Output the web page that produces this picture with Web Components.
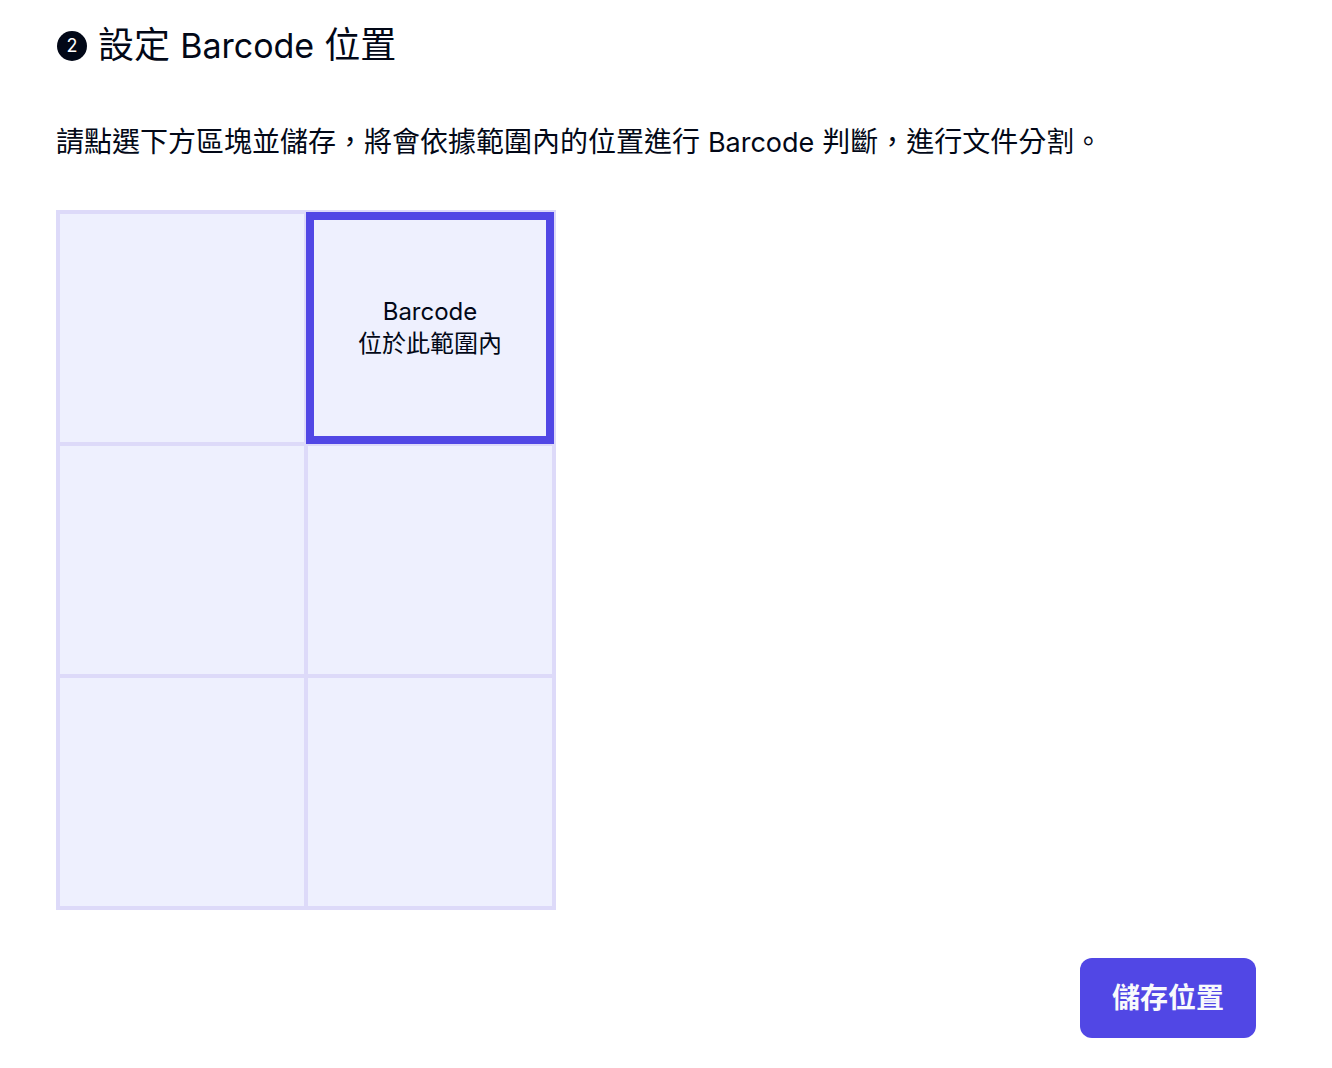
<!DOCTYPE html>
<html lang="zh-Hant">
<head>
<meta charset="utf-8">
<meta name="viewport" content="width=device-width, initial-scale=1">
<title>設定 Barcode 位置</title>
<style>
  body {
    margin: 0;
    background: #fff;
    color: #020817;
    font-family: Inter, "Noto Sans CJK TC", sans-serif;
    --primary: #5147e5;
    --cell: #eef0fe;
    --line: #dddaf9;
  }
  /* Inter runs large next to the Chinese glyphs, so its words are set a step smaller */
  [lang="en"] { font-size: 27px; }
  step-heading [lang="en"] { font-size: 34px; }
</style>
</head>
<body>
<barcode-settings>
  <step-heading slot="heading" step="2">設定 <span lang="en">Barcode</span> 位置</step-heading>
  <span slot="hint">請點選下方區塊並儲存，將會依據範圍內的位置進行 <span lang="en">Barcode</span> 判斷，進行文件分割。</span>
  <region-picker columns="2" rows="3" selected="2">Barcode<br>位於此範圍內</region-picker>
  <save-button slot="action">儲存位置</save-button>
</barcode-settings>

<script>
  class BarcodeSettings extends HTMLElement {
    constructor() {
      super();
      this.attachShadow({ mode: "open" }).innerHTML = `
        <style>
          :host { display: block; padding: 18px 76px 28px 56px; }
          section { display: flex; flex-direction: column; gap: 48px; }
          .text { display: flex; flex-direction: column; gap: 50px; }
          p { margin: 0; font-size: 28px; line-height: 38px; }
          footer { display: flex; justify-content: flex-end; }
        </style>
        <section>
          <div class="text">
            <slot name="heading"></slot>
            <p><slot name="hint"></slot></p>
          </div>
          <slot></slot>
          <footer><slot name="action"></slot></footer>
        </section>`;
    }
  }

  class StepHeading extends HTMLElement {
    connectedCallback() {
      this.attachShadow({ mode: "open" }).innerHTML = `
        <style>
          :host { display: block; }
          h2 { display: flex; align-items: center; gap: 10px; margin: 0; font-size: 36px; font-weight: 400; line-height: 54px; }
          .mark {
            display: grid; place-items: center; width: 30px; height: 30px; margin: 0 1px;
            border-radius: 50%; background: currentColor;
          }
          .mark b { color: #fff; font-size: 18px; font-weight: 400; line-height: 30px; }
        </style>
        <h2><span class="mark"><b>${this.getAttribute("step")}</b></span><span><slot></slot></span></h2>`;
    }
  }

  class RegionPicker extends HTMLElement {
    connectedCallback() {
      const columns = Number(this.getAttribute("columns"));
      const rows = Number(this.getAttribute("rows"));
      this.selected = Number(this.getAttribute("selected"));
      this.attachShadow({ mode: "open" }).innerHTML = `
        <style>
          :host { display: block; }
          .grid {
            box-sizing: border-box; width: 100%; max-width: 500px; aspect-ratio: 5 / 7;
            display: grid; grid-template: repeat(${rows}, 1fr) / repeat(${columns}, 1fr);
            border: 2px solid var(--line);
          }
          label {
            display: grid; place-items: center; min-width: 0;
            background: var(--cell); cursor: pointer;
            font-size: 24px; line-height: 32px; text-align: center;
          }
          input, span { grid-area: 1 / 1; }
          input {
            appearance: none; box-sizing: border-box; margin: 0;
            place-self: stretch; border: 2px solid var(--line); cursor: pointer;
          }
          input:checked { border: 8px solid var(--primary); }
        </style>
        <div class="grid" role="radiogroup"></div>`;
      const grid = this.shadowRoot.querySelector(".grid");
      for (let n = 1; n <= columns * rows; n++) {
        const label = document.createElement("label");
        const input = document.createElement("input");
        input.type = "radio";
        input.name = "region";
        input.value = n;
        input.checked = n === this.selected;
        input.setAttribute("aria-label", `區塊 ${n}`);
        const span = document.createElement("span");
        label.append(input, span);
        grid.append(label);
      }
      const caption = document.createElement("slot");
      const place = () => grid.querySelector("input:checked + span").append(caption);
      grid.addEventListener("change", place);
      place();
    }
  }

  class SaveButton extends HTMLElement {
    constructor() {
      super();
      this.attachShadow({ mode: "open" }).innerHTML = `
        <style>
          :host { display: block; }
          button {
            display: block; margin: 0; padding: 20px 32px; border: 0; border-radius: 12px;
            background: var(--primary); color: #f8fafc; cursor: pointer;
            font: inherit; font-size: 28px; font-weight: 700; line-height: 40px;
          }
        </style>
        <button type="button"><slot></slot></button>`;
    }
  }

  customElements.define("barcode-settings", BarcodeSettings);
  customElements.define("step-heading", StepHeading);
  customElements.define("region-picker", RegionPicker);
  customElements.define("save-button", SaveButton);
</script>
</body>
</html>
